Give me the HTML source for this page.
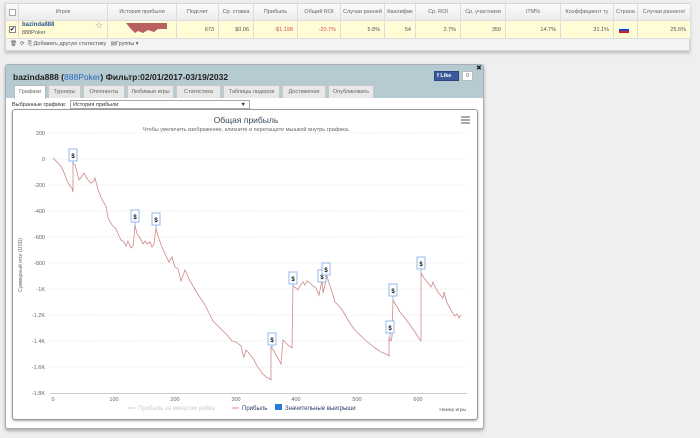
<!DOCTYPE html>
<html><head><meta charset="utf-8"><style>
*{margin:0;padding:0;box-sizing:border-box}
body{width:700px;height:438px;background:#efefef;font-family:"Liberation Sans","DejaVu Sans",sans-serif;position:relative;overflow:hidden;font-size:6px;color:#555}
.abs{position:absolute}
.tbl{left:5px;top:3px;width:685px;height:48px;background:#f4f4f4;border:1px solid #d6d6d6;box-shadow:0 2px 3px #bbb}
.hdr{left:0;top:0;height:17px;width:685px;background:linear-gradient(#fbfbfb,#ececec);border-bottom:1px solid #ddd}
.row{left:0;top:17px;height:18px;width:685px;background:#fffcd6;border-bottom:1px solid #ddd}
.c{position:absolute;top:0;height:100%;border-right:1px solid #ddd;font-size:5.5px;line-height:17px;text-align:center;color:#666;white-space:nowrap;overflow:hidden}
.r .c{text-align:right;padding-right:4px;line-height:18px;color:#555}
.panel{left:5px;top:64px;width:479px;height:365px;background:#fff;border:1px solid #aab;border-radius:3px;box-shadow:0 2px 3px #aaa}
.head{left:0;top:0;width:477px;height:33px;background:#b6cad2}
.tab{position:absolute;top:20px;height:13px;background:#e8e8e8;border:1px solid #c8c8c8;border-bottom:none;font-size:5.5px;line-height:12px;text-align:center;color:#666}
</style></head><body>
<div class="abs tbl">
 <div class="abs hdr">
  <div class="c" style="left:0;width:13px"><div style="width:7px;height:7px;border:1px solid #aaa;background:#fff;margin:5px 3px"></div></div>
  <div class="c" style="left:13px;width:89px">Игрок</div>
  <div class="c" style="left:102px;width:69px">История прибыли</div>
  <div class="c" style="left:171px;width:42px">Подсчет</div>
  <div class="c" style="left:213px;width:35px">Ср. ставка</div>
  <div class="c" style="left:248px;width:44px">Прибыль</div>
  <div class="c" style="left:292px;width:43px">Общий ROI</div>
  <div class="c" style="left:335px;width:44px">Случаи ранней</div>
  <div class="c" style="left:379px;width:31px">Квалифик</div>
  <div class="c" style="left:410px;width:45px">Ср. ROI</div>
  <div class="c" style="left:455px;width:45px">Ср. участники</div>
  <div class="c" style="left:500px;width:55px">ITM%</div>
  <div class="c" style="left:555px;width:53px">Коэффициент ту</div>
  <div class="c" style="left:608px;width:24px">Страна</div>
  <div class="c" style="left:632px;width:53px">Случаи раннего/</div>
 </div>
 <div class="abs row r">
  <div class="c" style="left:0;width:13px"><div style="width:7px;height:7px;border:1px solid #888;background:#fff;margin:5px 3px;font-size:6px;line-height:6px;text-align:center;color:#000">✔</div></div>
  <div class="c" style="left:13px;width:89px;text-align:left;padding-left:3px;line-height:8px"><b style="color:#2a5a9a;font-size:6px">bazinda888</b><br><span style="color:#555">888Poker</span><span style="position:absolute;left:76px;top:0;font-size:9px;color:#999">☆</span></div>
  <div class="c" style="left:102px;width:69px"><svg width="69" height="18" style="position:absolute;left:0;top:0"><polygon points="18,2 59,2 59,8 50,8 46,11 40,9 35,12 30,10 27,12 22,7" fill="#b86060"/></svg></div>
  <div class="c" style="left:171px;width:42px">673</div>
  <div class="c" style="left:213px;width:35px">$0.06</div>
  <div class="c" style="left:248px;width:44px;color:#c55">-$1.198</div>
  <div class="c" style="left:292px;width:43px;color:#c55">-20.7%</div>
  <div class="c" style="left:335px;width:44px">5.8%</div>
  <div class="c" style="left:379px;width:31px">54</div>
  <div class="c" style="left:410px;width:45px">2.7%</div>
  <div class="c" style="left:455px;width:45px">350</div>
  <div class="c" style="left:500px;width:55px">14.7%</div>
  <div class="c" style="left:555px;width:53px">31.1%</div>
  <div class="c" style="left:608px;width:24px"><div style="width:10px;height:6px;margin:6px auto;background:linear-gradient(#fff 33%,#2040c0 33%,#2040c0 66%,#d02020 66%)"></div></div>
  <div class="c" style="left:632px;width:53px">25.6%</div>
 </div>
 <div class="abs" style="left:4px;top:37px;font-size:5.5px;color:#555;white-space:nowrap">🗑 &nbsp;⟳ &nbsp;⎘ Добавить другую статистику &nbsp; ▤Группы ▾</div>
</div>

<div class="abs panel">
 <div class="abs head">
  <div class="abs" style="left:7px;top:7px;font-size:8.5px;font-weight:bold;color:#222;white-space:nowrap">bazinda888 (<span style="color:#2a6ab8;font-weight:normal">888Poker</span>) Фильтр:02/01/2017-03/19/2032</div>
  <div class="abs" style="left:428px;top:6px;width:25px;height:10px;background:#3b5998;border:1px solid #2a4480;color:#fff;font-size:5.5px;font-weight:bold;line-height:9px;padding-left:2px">f Like</div>
  <div class="abs" style="left:456px;top:6px;width:11px;height:10px;background:#fff;border:1px solid #bbb;font-size:5.5px;line-height:9px;text-align:center">0</div>
  <div class="abs" style="left:470px;top:-1px;font-size:7px;color:#222">✖</div>
  <div class="tab" style="left:8px;width:32px;background:#fff;border-color:#bbb;height:14px">Графики</div>
  <div class="tab" style="left:42px;width:33px">Турниры</div>
  <div class="tab" style="left:77px;width:42px">Оппоненты</div>
  <div class="tab" style="left:121px;width:47px">Любимые игры</div>
  <div class="tab" style="left:170px;width:45px">Статистика</div>
  <div class="tab" style="left:217px;width:57px">Таблицы лидеров</div>
  <div class="tab" style="left:276px;width:44px">Достижения</div>
  <div class="tab" style="left:322px;width:46px">Опубликовать</div>
 </div>
 <div class="abs" style="left:6px;top:37px;font-size:5.5px;color:#333;white-space:nowrap">Выбранные графики:</div>
 <div class="abs" style="left:64px;top:35px;width:180px;height:9px;border:1px solid #aaa;font-size:5.5px;line-height:8px;padding-left:2px;color:#333">История прибыли<span style="position:absolute;right:3px">▼</span></div>
 <div class="abs" style="left:6px;top:44px;width:466px;height:311px;border:1px solid #999;border-radius:3px;box-shadow:0 1px 2px #aaa"></div>
</div>

<svg class="abs" style="left:0;top:0" width="700" height="438" font-family="Liberation Sans, sans-serif">
 <text x="246" y="123" font-size="8.5" fill="#3a4a5a" text-anchor="middle">Общая прибыль</text>
 <text x="246" y="131" font-size="5.5" fill="#666" text-anchor="middle">Чтобы увеличить изображение, кликните и перетащите мышкой внутрь графика.</text>
 <g stroke="#555" stroke-width="1"><line x1="461" y1="117" x2="470" y2="117"/><line x1="461" y1="120" x2="470" y2="120"/><line x1="461" y1="123" x2="470" y2="123"/></g>
 <g stroke="#ccc" stroke-width="0.6" stroke-dasharray="1,1.5">
  <line x1="50" y1="133" x2="467" y2="133"/><line x1="50" y1="159" x2="467" y2="159"/><line x1="50" y1="185" x2="467" y2="185"/><line x1="50" y1="211" x2="467" y2="211"/><line x1="50" y1="237" x2="467" y2="237"/><line x1="50" y1="263" x2="467" y2="263"/><line x1="50" y1="289" x2="467" y2="289"/><line x1="50" y1="315" x2="467" y2="315"/><line x1="50" y1="341" x2="467" y2="341"/><line x1="50" y1="367" x2="467" y2="367"/>
 </g>
 <line x1="50" y1="393.5" x2="467" y2="393.5" stroke="#ccc" stroke-width="1"/>
 <g font-size="5.5" fill="#666" text-anchor="end">
  <text x="45" y="135">200</text><text x="45" y="161">0</text><text x="45" y="187">-200</text><text x="45" y="213">-400</text><text x="45" y="239">-600</text><text x="45" y="265">-800</text><text x="45" y="291">-1K</text><text x="45" y="317">-1.2K</text><text x="45" y="343">-1.4K</text><text x="45" y="369">-1.6K</text><text x="45" y="395">-1.8K</text>
 </g>
 <g font-size="5.5" fill="#666" text-anchor="middle">
  <text x="53" y="401">0</text><text x="114" y="401">100</text><text x="175" y="401">200</text><text x="236" y="401">300</text><text x="296" y="401">400</text><text x="357" y="401">500</text><text x="418" y="401">600</text>
 </g>
 <text x="22" y="265" font-size="5" fill="#666" text-anchor="middle" transform="rotate(-90 22 265)">Суммарный итог (USD)</text>
 <text x="466" y="411" font-size="4.8" fill="#555" text-anchor="end">Номер игры</text>
 <g font-size="6">
  <line x1="128" y1="408" x2="135" y2="408" stroke="#ccc"/><text x="138" y="410" fill="#ccc">Прибыль за минусом рейка</text>
  <line x1="232" y1="408" x2="239" y2="408" stroke="#d88"/><text x="242" y="410" fill="#2a3a6a">Прибыль</text>
  <rect x="275" y="404" width="7" height="6" fill="#2a7ad8"/><text x="285" y="410" fill="#2a3a6a">Значительные выигрыши</text>
 </g>
 <polyline fill="none" stroke="#d08888" stroke-width="0.8" points="53,158 58,163 62,168 65,175 67,181 70,186 72,188 73,192 73,163 75,165 77,172 79,180 82,176 84,173 86,177 88,180 91,183 93,182 95,178 97,186 100,195 104,203 106,206 108,218 112,225 116,229 119,236 121,240 124,242 126,246 128,241 131,248 133,246 134,237 135,225 137,234 140,238 143,244 145,241 147,244 150,242 152,247 154,244 156,228 158,236 162,247 166,256 169,262 172,257 175,267 178,269 181,281 185,270 189,279 194,288 197,293 201,299 205,305 209,313 213,321 217,325 220,328 222,330 225,333 228,336 232,341 236,342 241,346 243,355 244,357 246,350 248,352 251,356 254,360 257,366 260,370 262,373 266,377 270,379 271,380 271,347 274,351 276,355 279,360 281,364 283,340 286,343 289,346 292,348 293,286 296,288 298,290 300,286 303,282 305,285 307,281 310,283 313,286 316,288 319,295 320,290 321,285 322,276 323,293 325,285 326,280 327,276 329,283 332,292 335,302 338,305 340,307 344,313 348,320 352,326 355,330 360,335 365,340 370,344 375,348 381,352 388,355 389,356 389,338 391,341 392,337 393,300 396,305 400,312 405,318 410,325 415,332 420,340 421,341 421,273 424,278 428,283 431,287 432,285 433,282 435,287 438,292 441,296 443,298 444,292 447,303 450,308 452,312 455,316 457,314 459,318 461,315"/>
 <g fill="#fff" stroke="#7aa8e8" stroke-width="0.8" font-size="6" font-weight="bold" text-anchor="middle">
  <g><line x1="73" y1="161" x2="73" y2="164"/><rect x="69" y="149" width="8" height="12"/><text x="73" y="158" fill="#111" stroke="none">$</text></g>
  <g><line x1="135" y1="222" x2="135" y2="226"/><rect x="131" y="210" width="8" height="12"/><text x="135" y="219" fill="#111" stroke="none">$</text></g>
  <g><line x1="156" y1="225" x2="156" y2="228"/><rect x="152" y="213" width="8" height="12"/><text x="156" y="222" fill="#111" stroke="none">$</text></g>
  <g><line x1="272" y1="345" x2="272" y2="348"/><rect x="268" y="333" width="8" height="12"/><text x="272" y="342" fill="#111" stroke="none">$</text></g>
  <g><line x1="293" y1="284" x2="293" y2="287"/><rect x="289" y="272" width="8" height="12"/><text x="293" y="281" fill="#111" stroke="none">$</text></g>
  <g><line x1="322" y1="282" x2="322" y2="277"/><rect x="318" y="270" width="8" height="12"/><text x="322" y="279" fill="#111" stroke="none">$</text></g>
  <g><line x1="326" y1="275" x2="326" y2="279"/><rect x="322" y="263" width="8" height="12"/><text x="326" y="272" fill="#111" stroke="none">$</text></g>
  <g><line x1="393" y1="296" x2="393" y2="300"/><rect x="389" y="284" width="8" height="12"/><text x="393" y="293" fill="#111" stroke="none">$</text></g>
  <g><line x1="390" y1="333" x2="390" y2="338"/><rect x="386" y="321" width="8" height="12"/><text x="390" y="330" fill="#111" stroke="none">$</text></g>
  <g><line x1="421" y1="269" x2="421" y2="273"/><rect x="417" y="257" width="8" height="12"/><text x="421" y="266" fill="#111" stroke="none">$</text></g>
 </g>
</svg>
</body></html>
